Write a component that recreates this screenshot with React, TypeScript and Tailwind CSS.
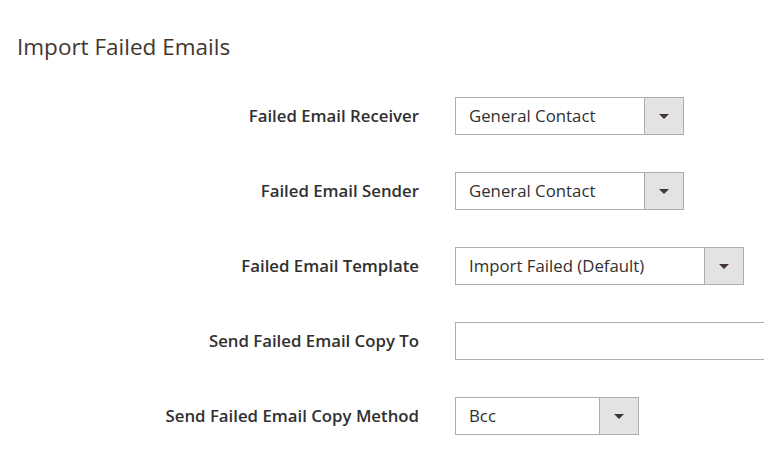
import React from "react";

const Arrow = () => (
  <svg width="10" height="5" viewBox="0 0 10 5" className="block">
    <path d="M0 0 L10 0 L5 5 Z" fill="#41362f" />
  </svg>
);

function Select({ value, width }: { value: string; width: number }) {
  return (
    <div
      className="flex h-[38px] border border-[#adadad] bg-white"
      style={{ width }}
    >
      <div className="flex-1 flex items-center pl-[13px] text-[16.8px] text-[#303030]">
        {value}
      </div>
      <div className="w-[39px] flex items-center justify-center bg-[#e3e3e3] border-l border-[#adadad]">
        <Arrow />
      </div>
    </div>
  );
}

function Row({ label, children }: { label: string; children: React.ReactNode }) {
  return (
    <div className="flex items-center h-[38px]">
      <div className="w-[419px] shrink-0 text-right text-[16.8px] font-semibold text-[#303030]">
        {label}
      </div>
      <div className="ml-[36px] shrink-0">{children}</div>
    </div>
  );
}

export default function App() {
  return (
    <div
      className="w-[764px] h-[471px] bg-white overflow-hidden"
      style={{ fontFamily: '"Open Sans", sans-serif' }}
    >
      <div className="pl-[17px] pt-[32px] text-[22.5px] leading-[30px] text-[#41362f]">
        Import Failed Emails
      </div>
      <div className="mt-[35px] flex flex-col gap-[37px]">
        <Row label="Failed Email Receiver">
          <Select value="General Contact" width={229} />
        </Row>
        <Row label="Failed Email Sender">
          <Select value="General Contact" width={229} />
        </Row>
        <Row label="Failed Email Template">
          <Select value="Import Failed (Default)" width={289} />
        </Row>
        <Row label="Send Failed Email Copy To">
          <div className="h-[38px] w-[330px] border border-[#adadad] bg-white" />
        </Row>
        <Row label="Send Failed Email Copy Method">
          <Select value="Bcc" width={184} />
        </Row>
      </div>
    </div>
  );
}
